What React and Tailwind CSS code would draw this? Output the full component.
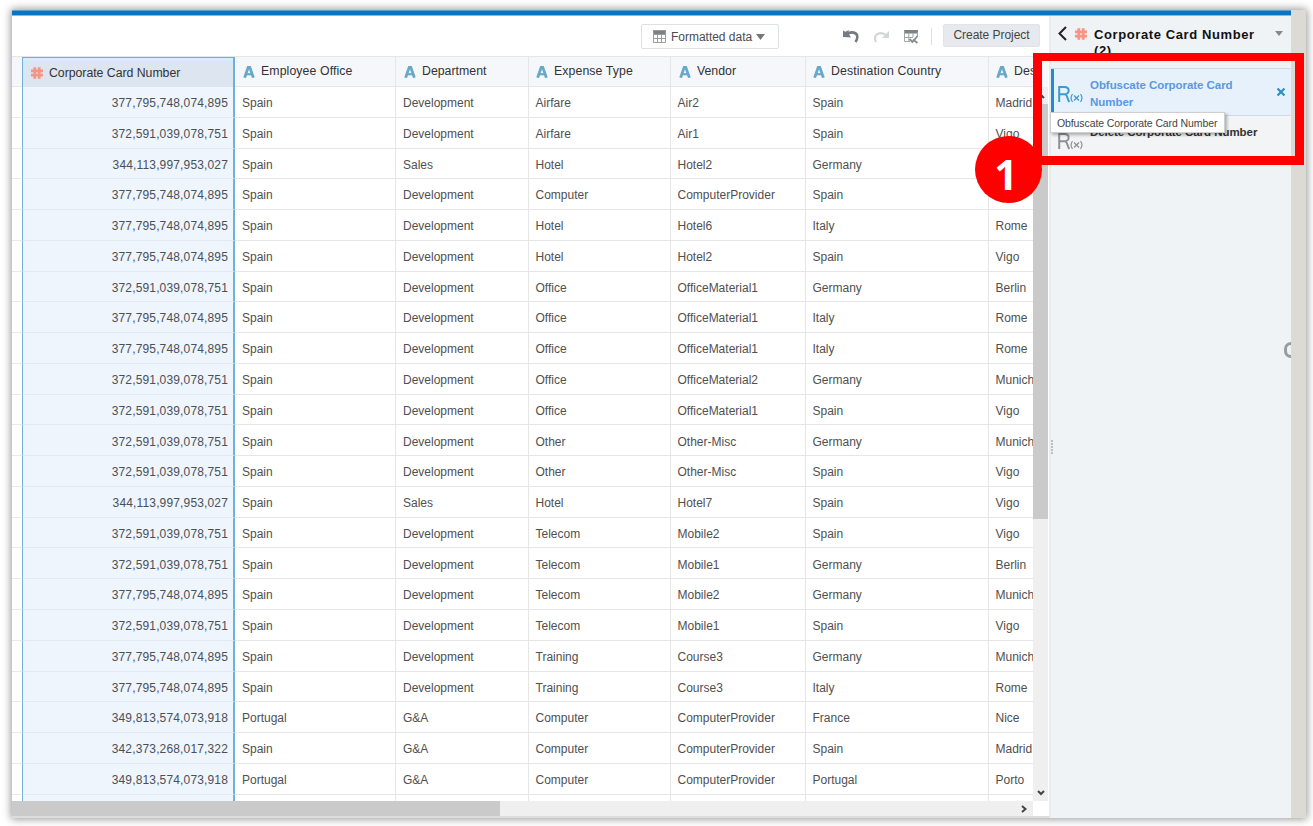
const COLS = [
  { name: 'Employee Office', w: 'w-[161px]', icon: 'ml-[8px]', track: 'tracking-[0.1px]' },
  { name: 'Department', w: 'w-[133px]', icon: 'ml-[8px]', track: 'tracking-[0.02px]' },
  { name: 'Expense Type', w: 'w-[142px]', icon: 'ml-[7px]', track: 'tracking-[0.1px]' },
  { name: 'Vendor', w: 'w-[135px]', icon: 'ml-[8px]', track: 'tracking-[0px]' },
  { name: 'Destination Country', w: 'w-[183px]', icon: 'ml-[7px]', track: 'tracking-[0.12px]' },
  { name: 'Destination City', w: 'w-[120px]', icon: 'ml-[7px]', track: 'tracking-[0.1px]' },
];

const A = '377,795,748,074,895';
const B = '372,591,039,078,751';
const C = '344,113,997,953,027';
const D = '349,813,574,073,918';
const E = '342,373,268,017,322';

const ROWS = [
  [A, 'Spain', 'Development', 'Airfare', 'Air2', 'Spain', 'Madrid'],
  [B, 'Spain', 'Development', 'Airfare', 'Air1', 'Spain', 'Vigo'],
  [C, 'Spain', 'Sales', 'Hotel', 'Hotel2', 'Germany', ''],
  [A, 'Spain', 'Development', 'Computer', 'ComputerProvider', 'Spain', ''],
  [A, 'Spain', 'Development', 'Hotel', 'Hotel6', 'Italy', 'Rome'],
  [A, 'Spain', 'Development', 'Hotel', 'Hotel2', 'Spain', 'Vigo'],
  [B, 'Spain', 'Development', 'Office', 'OfficeMaterial1', 'Germany', 'Berlin'],
  [A, 'Spain', 'Development', 'Office', 'OfficeMaterial1', 'Italy', 'Rome'],
  [A, 'Spain', 'Development', 'Office', 'OfficeMaterial1', 'Italy', 'Rome'],
  [B, 'Spain', 'Development', 'Office', 'OfficeMaterial2', 'Germany', 'Munich'],
  [B, 'Spain', 'Development', 'Office', 'OfficeMaterial1', 'Spain', 'Vigo'],
  [B, 'Spain', 'Development', 'Other', 'Other-Misc', 'Germany', 'Munich'],
  [B, 'Spain', 'Development', 'Other', 'Other-Misc', 'Spain', 'Vigo'],
  [C, 'Spain', 'Sales', 'Hotel', 'Hotel7', 'Spain', 'Vigo'],
  [B, 'Spain', 'Development', 'Telecom', 'Mobile2', 'Spain', 'Vigo'],
  [B, 'Spain', 'Development', 'Telecom', 'Mobile1', 'Germany', 'Berlin'],
  [A, 'Spain', 'Development', 'Telecom', 'Mobile2', 'Germany', 'Munich'],
  [B, 'Spain', 'Development', 'Telecom', 'Mobile1', 'Spain', 'Vigo'],
  [A, 'Spain', 'Development', 'Training', 'Course3', 'Germany', 'Munich'],
  [A, 'Spain', 'Development', 'Training', 'Course3', 'Italy', 'Rome'],
  [D, 'Portugal', 'G&A', 'Computer', 'ComputerProvider', 'France', 'Nice'],
  [E, 'Spain', 'G&A', 'Computer', 'ComputerProvider', 'Spain', 'Madrid'],
  [D, 'Portugal', 'G&A', 'Computer', 'ComputerProvider', 'Portugal', 'Porto'],
  ['', '', '', '', '', '', ''],
];

function HashIcon({ className }) {
  return (
    <svg className={className} viewBox="0 0 12 12" fill="none" stroke="#f79483" strokeWidth="2.8">
      <path d="M3.8 0.3V11.7M8.2 0.3V11.7M0 3.8H12M0 8.2H12" />
    </svg>
  );
}

function AttrIcon({ className }) {
  return (
    <svg className={className} viewBox="0 0 12 12" fill="none" stroke="#68a9cb">
      <path d="M1.6 11.8L5.2 1.4H6.8L10.4 11.8" strokeWidth="2.8" />
      <path d="M3 8.2H9" strokeWidth="2.2" />
    </svg>
  );
}

function Fx({ color }) {
  return (
    <svg className="h-[18px] w-[26px] shrink-0" viewBox="0 0 26 18" fill="none" stroke={color}>
      <path d="M1.2 17V2H6.5C12 2 12 9.3 6.5 9.3H1.2M7 9.3C9.5 9.8 9.2 14 11.3 17" strokeWidth="2" />
      <path d="M14.5 9C12.7 11.5 12.7 14.5 14.5 17M22.5 9C24.3 11.5 24.3 14.5 22.5 17M16 10.5L21 15.5M21 10.5L16 15.5" strokeWidth="1.2" />
    </svg>
  );
}

function Toolbar() {
  return (
    <div className="flex h-10 shrink-0 items-start bg-white pl-[629px]">
      <button className="mt-[8px] flex h-[25px] w-[138px] shrink-0 items-center rounded-[2px] border border-[#dde1e4] bg-white pl-[11px] text-[12px] tracking-[-0.02px] text-[#4c4c4c]">
        <svg className="mr-[5px] h-[13px] w-[13px]" viewBox="0 0 13 13" fill="none">
          <path d="M0 0H13V4H0Z" fill="#7b8085" />
          <path d="M0.5 0.5H12.5V12.5H0.5ZM0 4.5H13M0 8.5H13M4.5 4V13M8.5 4V13" stroke="#989da1" />
        </svg>
        Formatted data
        <svg className="ml-[4px] h-[6px] w-[9px]" viewBox="0 0 9 6">
          <path d="M0 0H9L4.5 6Z" fill="#777" />
        </svg>
      </button>
      <svg className="ml-[64px] mt-[13px] h-[14px] w-[17px] shrink-0" viewBox="0 0 17 14" fill="none">
        <path d="M0 1.5L2.5 2.8L6 1L5.2 4L8 8.5L0 8Z" fill="#757b81" />
        <path d="M3.5 5.2C8 2 14.5 3.2 14.3 8.2C14.2 10 13.5 11.5 12.5 13" stroke="#757b81" strokeWidth="2.6" />
      </svg>
      <svg className="ml-[13px] mt-[14px] h-[13px] w-[16px] shrink-0" viewBox="0 0 16 13" fill="none">
        <path d="M16 1V8H9Z" fill="#d3d6d8" />
        <path d="M13.5 5.5C9 1.5 2.5 3 2 8C1.9 9.5 2.2 10.8 3 12" stroke="#d3d6d8" strokeWidth="2.2" />
      </svg>
      <svg className="ml-[15px] mt-[14px] h-[14px] w-[14px] shrink-0" viewBox="0 0 14 14" fill="none">
        <path d="M0 0H14V3.5H0Z" fill="#7d8388" />
        <path d="M0.5 1V11.5H6M13.5 2V6M1 7.5H9M4.8 3V11.5M9 3V7" stroke="#a0a5a9" />
        <path d="M5.5 9L8.5 12L13.5 6M9 9.5L13.5 13" stroke="#858a8f" strokeWidth="1.8" />
      </svg>
      <div className="ml-[13px] mt-[12px] h-[17px] w-px shrink-0 bg-[#dedede]" />
      <button className="ml-[11px] mt-[8px] h-[23px] w-[97px] shrink-0 rounded-[2px] border border-[#e0e4e8] bg-[#e6eaee] text-[12px] leading-[21px] tracking-[-0.05px] text-[#444]">
        Create Project
      </button>
    </div>
  );
}

function Grid() {
  return (
    <div className="flex h-[745px] overflow-hidden">
      <div className="w-[1021px] shrink-0 overflow-hidden">
        <div className="flex h-[31px] w-[1120px] border-t border-[#e6e6e9] bg-[#f6f7fa] text-[12.3px] text-[#333]">
          <div className="w-[10px] border-b border-[#e9e9ea]" />
          <div className="flex w-[213px] items-center whitespace-nowrap border-l border-r-2 border-t border-[#6eb2d9] bg-[#dde5f1] pl-[8px] pt-px tracking-[-0.03px] shadow-[inset_0_3px_0_#d8ebfc]">
            <HashIcon className="mr-[6px] h-[12px] w-[12px] shrink-0" />
            Corporate Card Number
          </div>
          {COLS.map((c) => (
            <div key={c.name} className={'flex items-center whitespace-nowrap border-b border-r border-[#e6e6e9] ' + c.w + ' ' + c.track}>
              <AttrIcon className={'mr-[6px] mt-px h-[12px] w-[12px] shrink-0 ' + c.icon} />
              {c.name}
            </div>
          ))}
        </div>
        {ROWS.map((r, i) => (
          <div key={i} className="flex h-[30.78px] w-[1120px] text-[12px] text-[#505050]">
            <div className="w-[10px] border-b border-[#e9e9e9]" />
            <div className="flex w-[213px] items-center justify-end border-b border-l border-r-2 border-x-[#6eb2d9] border-b-[#e3e9f0] bg-[#eff5fd] pr-[5px] pt-[2.5px] tracking-[0.15px] text-[#4a5058]">
              {r[0]}
            </div>
            {r.slice(1).map((v, j) => (
              <div key={j} className={'flex items-center border-b border-r border-[#e6e6e6] bg-white pt-[2.5px] ' + (j === 1 ? 'pl-[7px] ' : j === 0 ? 'pl-[7px] ' : 'pl-[6.5px] ') + COLS[j].w}>
                {v}
              </div>
            ))}
          </div>
        ))}
      </div>
      <div className="flex w-[15px] shrink-0 flex-col bg-[#efefef]">
        <div className="h-[31px] bg-[#f7f8fa]" />
        <div className="flex h-[17px] items-center justify-center">
          <svg className="h-[6px] w-[8px]" viewBox="0 0 8 6" fill="none" stroke="#444" strokeWidth="2">
            <path d="M1 5L4 2L7 5" />
          </svg>
        </div>
        <div className="h-[415px] bg-[#cacaca]" />
        <div className="flex grow items-end justify-center pb-[5px]">
          <svg className="h-[6px] w-[8px]" viewBox="0 0 8 6" fill="none" stroke="#444" strokeWidth="2">
            <path d="M1 1L4 4L7 1" />
          </svg>
        </div>
      </div>
    </div>
  );
}

function SidePanel() {
  return (
    <div className="flex w-[242px] shrink-0 border-l-2 border-[#e8ecef] bg-[#eff3f6]">
      <div className="flex w-full flex-col">
        <div className="flex h-[53px] shrink-0 items-start border-b border-[#cfdbe3] pl-[7px]">
          <svg className="mt-[10px] h-[15px] w-[9px] shrink-0" viewBox="0 0 9 15" fill="none" stroke="#222" strokeWidth="2">
            <path d="M8 1L1.5 7.5L8 14" />
          </svg>
          <HashIcon className="ml-[8px] mt-[12px] h-[12px] w-[12px] shrink-0" />
          <div className="ml-[7px] mt-[11px] w-[180px] shrink-0 text-[13px] font-bold leading-[16px] tracking-[0.6px] text-[#111]">
            Corporate Card Number
            <br />
            (2)
          </div>
          <svg className="ml-[1px] mt-[15px] h-[5px] w-[8px] shrink-0" viewBox="0 0 8 5">
            <path d="M0 0H8L4 5Z" fill="#888" />
          </svg>
        </div>
        <div className="flex h-[47px] shrink-0 border-b border-l-[3px] border-b-[#cfdbe3] border-l-[#1b8fd2] bg-[#e6f1fb] pl-[4px]">
          <div className="mt-[16px]">
            <Fx color="#3b9bd0" />
          </div>
          <div className="ml-[6px] mt-[8px] w-[185px] text-[11.5px] font-bold leading-[17px] tracking-[-0.05px] text-[#5a98e3]">
            Obfuscate Corporate Card
            <br />
            Number
          </div>
          <svg className="ml-[2px] mt-[19px] h-[8px] w-[8px] shrink-0" viewBox="0 0 8 8" fill="none" stroke="#2e8fc8" strokeWidth="2.2">
            <path d="M0.5 0.5L7.5 7.5M7.5 0.5L0.5 7.5" />
          </svg>
        </div>
        <div className="flex h-[47px] shrink-0 bg-[#f3f4f5] pl-[7px]">
          <div className="mt-[16px]">
            <Fx color="#8d9195" />
          </div>
          <div className="ml-[6px] mt-[8px] whitespace-nowrap text-[11.5px] font-bold leading-[17px] tracking-[-0.05px] text-[#333]">
            Delete Corporate Card Number
          </div>
        </div>
        <div className="mt-[277px] flex h-[14px] w-[2px] shrink-0 flex-col justify-between">
          {[0, 1, 2, 3, 4].map((k) => (
            <div key={k} className="h-[2px] w-[2px] bg-[#b9bec2]" />
          ))}
        </div>
      </div>
    </div>
  );
}

export default function App() {
  return (
    <div className="relative h-[826px] w-[1313px] overflow-hidden bg-white pl-3 pt-[10px] font-['Liberation_Sans',Arial,sans-serif]">
      <div className="flex h-[808px] w-[1294px] shadow-[0_0_8px_1px_rgba(0,0,0,0.42)]">
        <div className="flex w-[1279px] shrink-0 flex-col">
          <div className="h-[6px] shrink-0 border-b border-t border-b-[#7fbbe2] border-t-[#5f9fc8] bg-[#0575c4]" />
          <div className="flex grow">
            <div className="flex w-[1037px] shrink-0 flex-col bg-white">
              <Toolbar />
              <Grid />
              <div className="flex h-[15px] shrink-0">
                <div className="w-[488px] bg-[#cacaca]" />
                <div className="flex w-[533px] items-center justify-end bg-[#efefef] pr-[6px]">
                  <svg className="h-[8px] w-[6px]" viewBox="0 0 6 8" fill="none" stroke="#444" strokeWidth="2">
                    <path d="M1 1L4.5 4L1 7" />
                  </svg>
                </div>
              </div>
              <div className="h-[2px] bg-[#dcdcdc]" />
            </div>
            <SidePanel />
          </div>
        </div>
        <div className="w-[15px] bg-[#dcdad5]" />
      </div>

      <div className="absolute left-[1284px] top-[342px] h-[17px] w-[7px] overflow-hidden">
        <div className="h-[16px] w-[14px] rounded-full border-[3px] border-[#989c9e]" />
      </div>
      <div className="absolute left-[1050px] top-[112px] h-[21px] w-[175px] whitespace-nowrap border border-[#cfcfcf] bg-white pl-[6px] text-[10.5px] leading-[20px] tracking-[-0.1px] text-[#444] shadow-[2px_2px_3px_rgba(0,0,0,0.3)]">
        Obfuscate Corporate Card Number
      </div>
      <div className="absolute left-[1033px] top-[53px] h-[112px] w-[271px] border-[9px] border-t-[8px] border-[#fe0000]" />
      <div className="absolute left-[975px] top-[136px] flex h-[67px] w-[67px] items-center justify-center rounded-full bg-[#fe0000] pr-[5px] pt-[9px] font-['Open_Sans','Noto_Sans',sans-serif] text-[41px] font-bold leading-none text-white">
        1
      </div>
    </div>
  );
}
